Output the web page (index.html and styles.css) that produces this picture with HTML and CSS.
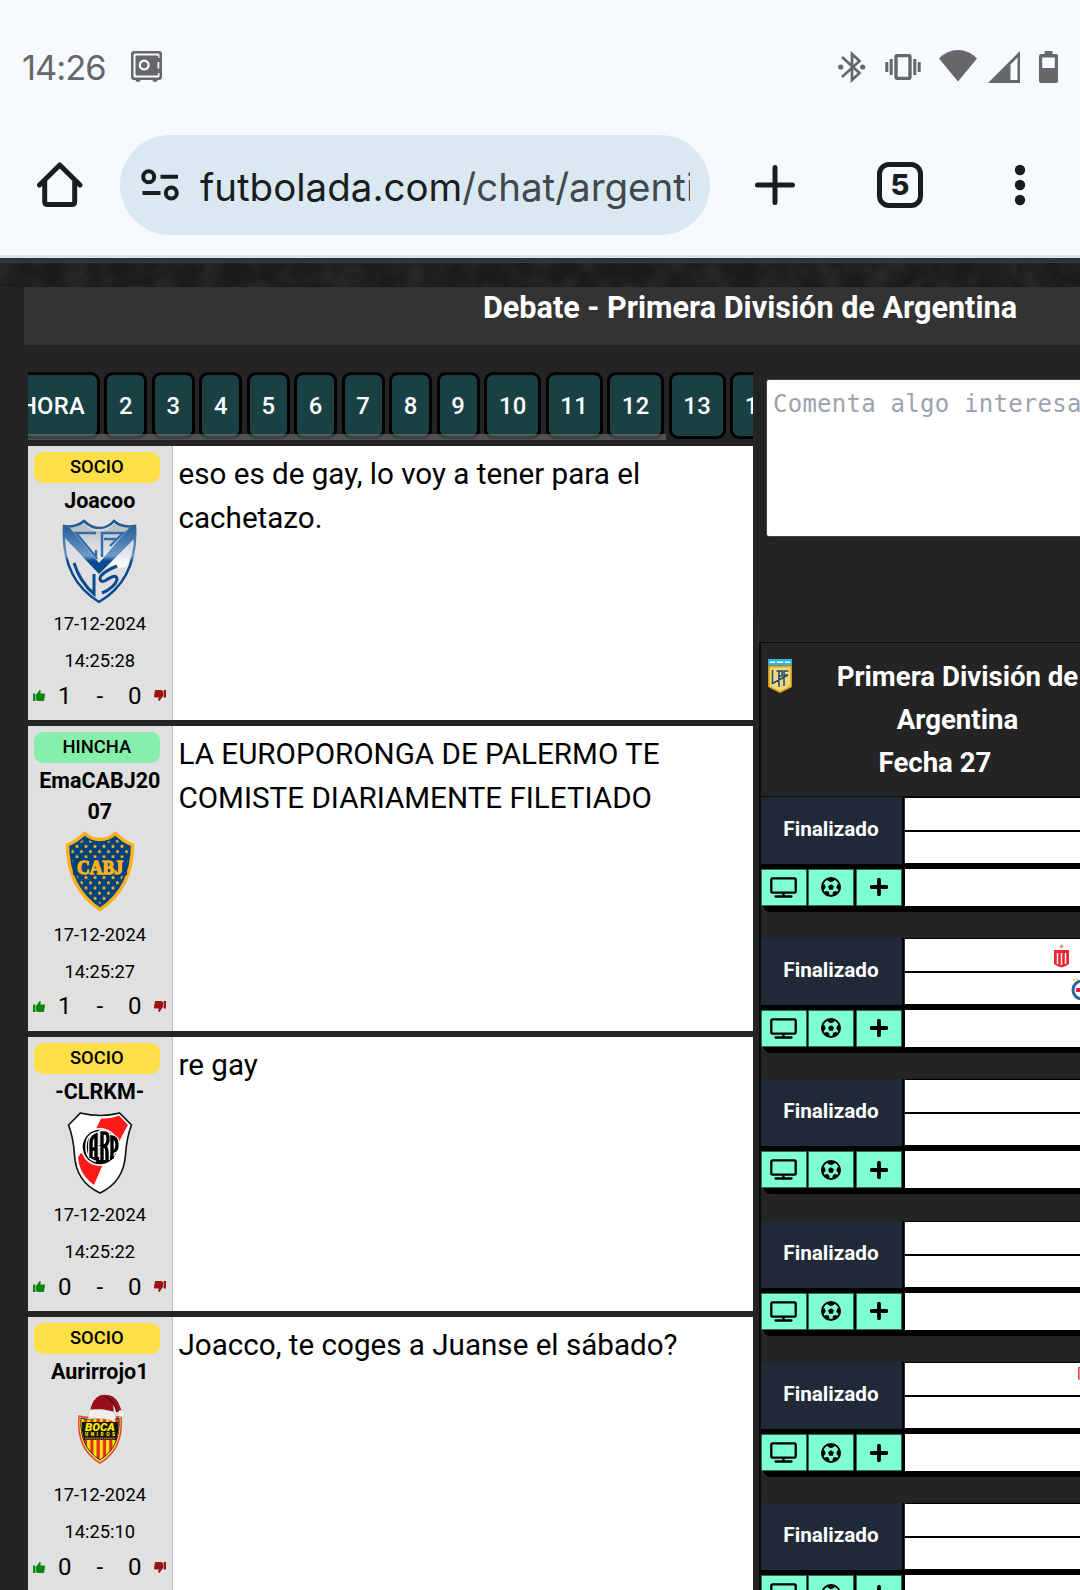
FILE: index.html
```html
<!DOCTYPE html>
<html lang="es">
<head>
<meta charset="utf-8">
<title>Debate - Primera División de Argentina</title>
<link rel="stylesheet" href="styles.css">
</head>
<body>
<svg class="defs" width="0" height="0">
  <defs>
    <symbol id="up" viewBox="0 0 12 11"><path d="M0 3.5h2.4V11H0zM3 5l3.6-5c1.2.1 1.3.9 1 2L7.2 3.6H11c.7 0 1 .5 1 1.1L11.2 10c-.1.6-.5 1-1.1 1H5L3 10z"/></symbol>
    <symbol id="tv" viewBox="0 0 27 21"><path d="M2.500 1.300h22q1.200 0 1.200 1.200v12q0 1.200-1.200 1.200h-22q-1.200 0-1.200-1.200v-12q0-1.200 1.200-1.200zM13.500 16v3.500M5.500 19.500h16" fill="none" stroke="#000" stroke-width="2.300" stroke-linecap="round"/></symbol>
    <symbol id="ball" viewBox="0 0 20 20"><circle cx="10" cy="10" r="9" fill="none" stroke="#000" stroke-width="1.900"/><path d="M10 7.200l2.900 2.100-1.100 3.400H8.200L7.100 9.300zM6 1.300h8L13.200 3.700 10 5.200 6.800 3.700zM.8 7l2.800.3L4.700 10.500 2.800 13 .8 13zM19.200 7l-2.800.3L15.300 10.500l1.900 2.500 2 0zM3.500 15.800l1.300-1.800 2.800.5 1 2.500-1 2zM16.500 15.800l-1.300-1.800-2.800.5-1 2.500 1 2z"/></symbol>
    <symbol id="plus" viewBox="0 0 18 18"><path d="M9 1.700v14.600M1.700 9h14.600" stroke="#000" stroke-width="3.800" stroke-linecap="round"/></symbol>
  </defs>
</svg>

<header class="browser">
  <div class="status">
    <span class="clock">14:26</span>
    <svg class="vault" width="31" height="31" viewBox="0 0 31 31"><path fill="#666769" fill-rule="evenodd" d="M3 0h25q3 0 3 3v23q0 3-3 3h-1.500q0 2-2.500 2t-2.500-2h-12q0 2-2.500 2t-2.500-2H3q-3 0-3-3V3q0-3 3-3zm1 2.500q-1.500 0-1.500 1.500v21q0 1.500 1.500 1.500h23q1.500 0 1.500-1.500v-3h-1.500v1q0 1.500-1.500 1.500H6q-1.500 0-1.500-1.500V6q0-1.500 1.500-1.500h20q1.500 0 1.500 1.500v1h1V4q0-1.500-1.500-1.500zM26.500 11v6.500h1.800V11zM13.200 8.500a5.500 5.500 0 1 0 .01 0zM13.200 10.700a3.300 3.300 0 1 1-.01 0z"/></svg>
    <svg class="bt" width="28" height="32" viewBox="0 0 28 32"><g fill="none" stroke="#666769" stroke-width="2.700"><path d="M4 6l17.500 16-7.500 7V3l7.500 7L4 26"/></g><circle cx="2.700" cy="16" r="2.600" fill="#666769"/><circle cx="24.700" cy="16" r="2.600" fill="#666769"/></svg>
    <svg class="vib" width="36" height="26" viewBox="0 0 36 26"><path d="M1.800 8v10M6.200 5v16M29.800 5v16M34.200 8v10" stroke="#666769" stroke-width="3"/><rect x="11" y="1.500" width="14" height="23" rx="1.500" fill="none" stroke="#666769" stroke-width="3.400"/></svg>
    <svg class="wifi" width="38" height="32" viewBox="0 0 38 32"><path fill="#666769" d="M0 8.500Q8 0 19 0t19 8.500L19 31.500z"/></svg>
    <svg class="sig" width="32" height="32" viewBox="0 0 32 32"><path fill="#666769" fill-rule="evenodd" d="M32 0v32H0zM29.500 6.500L22.500 13.500v15.500h7z"/></svg>
    <svg class="bat" width="19" height="32" viewBox="0 0 19 32"><path fill="#666769" fill-rule="evenodd" d="M5.500 0h8v3H17q2 0 2 2v25q0 2-2 2H2q-2 0-2-2V5q0-2 2-2h3.500zM3.200 6.500v10.500h12.600V6.500z"/></svg>
  </div>
  <div class="toolbar">
    <svg class="home" width="46" height="46" viewBox="0 0 46 46"><path d="M2.500 23L22.700 3 43 23M7.700 19.500v20q0 3 3 3h24q3 0 3-3v-20" fill="none" stroke="#191d20" stroke-width="5" stroke-linecap="round" stroke-linejoin="round"/></svg>
    <div class="omnibox">
      <svg width="38" height="32" viewBox="0 0 38 32"><g fill="none" stroke="#191d20" stroke-width="4"><circle cx="7.700" cy="7.700" r="5.500"/><circle cx="30.300" cy="24" r="5.500"/><path d="M19.500 7.700H37M1.500 24H19.500"/></g></svg>
      <div class="url"><span class="host">futbolada.com</span><span class="path">/chat/argenti</span></div>
    </div>
    <svg class="newtab" width="40" height="40" viewBox="0 0 40 40"><path d="M20 2.500v35M2.500 20h35" stroke="#191d20" stroke-width="5" stroke-linecap="round"/></svg>
    <div class="tabs">5</div>
    <svg class="more" width="12" height="42" viewBox="0 0 12 42"><g fill="#191d20"><circle cx="6" cy="6" r="5.200"/><circle cx="6" cy="21" r="5.200"/><circle cx="6" cy="36" r="5.200"/></g></svg>
  </div>
</header>

<div class="strip">
  <svg width="1080" height="24"><filter id="n" x="0" y="0" width="100%" height="100%"><feTurbulence type="fractalNoise" baseFrequency="0.045" numOctaves="3" seed="4"/><feColorMatrix values="0 0 0 0 .16  0 0 0 0 .16  0 0 0 0 .16  .9 0 0 0 -.3"/></filter><rect width="1080" height="24" filter="url(#n)" opacity=".35"/></svg>
</div>

<main class="page">
  <h1 class="title">Debate - Primera División de Argentina</h1>
  <div class="columns">
    <section class="chat">
      <nav class="pager">
        <a class="now">AHORA</a><a>2</a><a>3</a><a>4</a><a>5</a><a>6</a><a>7</a><a>8</a><a>9</a><a class="w">10</a><a class="w">11</a><a class="w">12</a><a class="w">13</a><a class="w">14</a>
        <i class="thumb"></i>
      </nav>

      <article class="msg">
        <aside>
          <span class="badge">SOCIO</span>
          <b class="name">Joacoo</b>
          <svg class="crest" width="78" height="86" viewBox="0 0 78 86">
            <defs><linearGradient id="vg" gradientUnits="userSpaceOnUse" x1="0" y1="0" x2="0" y2="84"><stop offset="0" stop-color="#174f8a"/><stop offset=".44" stop-color="#6b9bc9"/><stop offset=".5" stop-color="#0a4b8e"/><stop offset="1" stop-color="#0a4b8e"/></linearGradient><linearGradient id="vs" x2="0" y2="1"><stop offset="0" stop-color="#b4b9c0"/><stop offset="1" stop-color="#fff"/></linearGradient></defs>
            <path d="M3 7q12 2 20-5 7 7 15.500 7T53 2q7 7 21 5 3 53-36 76Q0 60 3 7z" fill="#e0e0e2" stroke="url(#vg)" stroke-width="2.500"/>
            <path d="M5 9q10 1 18-4 7 7 15.500 7T53 5q8 5 18 4 1 22-5 38Q54 53 39 39 24 26 6 32z" fill="url(#vs)"/>
            <path d="M3 7l6 2 29 35L68 9l6-2v12L38 55 4 19z" fill="url(#vg)"/>
            <path d="M35 14H15l20 24v-7M41 38V14h21L49 27M43 20h12" fill="none" stroke="#336ca8" stroke-width="2.400"/>
            <path d="M13 44q6 19 20 31V55M56 47q-17 7-17 13 1 5 8 0 9-6 9 1-3 8-15 13" fill="none" stroke="#0a4b8e" stroke-width="3"/>
          </svg>
          <time>17-12-2024</time><time>14:25:28</time>
          <div class="votes"><svg class="up"><use href="#up"/></svg><span>1</span><span>-</span><span>0</span><svg class="down"><use href="#up"/></svg></div>
        </aside>
        <p>eso es de gay, lo voy a tener para el cachetazo.</p>
      </article>

      <article class="msg two">
        <aside>
          <span class="badge fan">HINCHA</span>
          <b class="name">EmaCABJ2007</b>
          <svg class="crest" width="78" height="86" viewBox="0 0 78 86">
            <defs><pattern id="st" width="9" height="10.400" patternUnits="userSpaceOnUse"><path fill="#fbb516" d="M2.500.500l.7 1.400 1.500.2-1.100 1 .3 1.500-1.400-.7-1.400.7.3-1.500-1.100-1 1.500-.2z"/><path transform="translate(4.500 5.200)" fill="#fbb516" d="M2.500.500l.7 1.400 1.500.2-1.100 1 .3 1.500-1.400-.7-1.400.7.3-1.500-1.100-1 1.500-.2z"/></pattern></defs>
            <path d="M6.500 17Q16 13 23.500 5.500q7 6 15.500 6t15.500-6Q62 13 71.500 17q0 43-32.500 64.500Q6.500 60 6.500 17z" fill="#00427f" stroke="#fcb11a" stroke-width="3.400"/>
            <path d="M10 19Q19 15 24 10q7 5 15 5t15-5q5 5 14 9-1 38-29 57Q11 57 10 19z" fill="url(#st)"/>
            <rect x="12" y="30" width="54" height="17" fill="#00427f"/>
            <text x="39" y="45.500" textLength="46" lengthAdjust="spacingAndGlyphs" text-anchor="middle" font-family="Liberation Serif, serif" font-weight="700" font-size="19" fill="#fcb11a" stroke="#fcb11a" stroke-width="1.300">CABJ</text>
          </svg>
          <time>17-12-2024</time><time>14:25:27</time>
          <div class="votes"><svg class="up"><use href="#up"/></svg><span>1</span><span>-</span><span>0</span><svg class="down"><use href="#up"/></svg></div>
        </aside>
        <p>LA EUROPORONGA DE PALERMO TE COMISTE DIARIAMENTE FILETIADO</p>
      </article>

      <article class="msg">
        <aside>
          <span class="badge">SOCIO</span>
          <b class="name">-CLRKM-</b>
          <svg class="crest" width="78" height="86" viewBox="0 0 78 86">
            <path d="M7.500 15L19.500 3q20 5 39 0l12 12q-5 13-6 30-2 27-25.500 38Q15 72 13.500 45 12.500 28 7.500 15z" fill="#fff" stroke="#111" stroke-width="1.600"/>
            <path d="M40 8.500q10 .5 18-3l9 9.500q-3 5-9 17L35 19zM20 43l22 11-9 21Q18 64 17 47z" fill="#fd1a18"/>
            <circle cx="39" cy="37" r="19" fill="#fff"/><circle cx="39" cy="37" r="17.300" fill="#000"/>
            <path d="M35 22.500q-10 2-10 14.500t10 14.500" fill="none" stroke="#fff" stroke-width="1.500"/>
            <g fill="none" stroke="#fff" stroke-width="5.800"><path d="M30 47V33q0-6 5-8v22M30 39h5M41 50V23h3q3 0 3 6t-4 7q3 1 3 7v7M51 46V27q5 1 5 8t-5 6"/></g>
            <g fill="none" stroke="#000" stroke-width="3.400"><path d="M30 48V33q0-6 5-8v24M30 39h5M41 52V23h3q3 0 3 6t-4 7q3 1 3 7v9M51 49V27q5 1 5 8t-5 6"/></g>
          </svg>
          <time>17-12-2024</time><time>14:25:22</time>
          <div class="votes"><svg class="up"><use href="#up"/></svg><span>0</span><span>-</span><span>0</span><svg class="down"><use href="#up"/></svg></div>
        </aside>
        <p>re gay</p>
      </article>

      <article class="msg">
        <aside>
          <span class="badge">SOCIO</span>
          <b class="name">Aurirrojo1</b>
          <svg class="crest" width="78" height="86" viewBox="0 0 78 86">
            <defs><pattern id="bs" width="6.300" height="10" patternUnits="userSpaceOnUse"><rect width="6.300" height="10" fill="#e52a2b"/><rect x="1" width="3" height="10" fill="#fff000"/></pattern></defs>
            <path d="M18 26q10 3 21-1 11 4 21 1 3 33-21 47Q15 59 18 26z" fill="#fff04a" stroke="#e8422c" stroke-width="1.500"/>
            <path d="M20 28q10 3 19-1 9 4 19 1 2 29-19 42Q18 57 20 28z" fill="url(#bs)" stroke="#222" stroke-width="1"/>
            <path d="M21 32h36v9l-2 9H23l-2-9z" fill="#16150f"/>
            <text x="39" y="40.500" textLength="30" lengthAdjust="spacingAndGlyphs" text-anchor="middle" font-family="Roboto, sans-serif" font-weight="900" font-style="italic" font-size="10" fill="#fff000">BOCA</text>
            <text x="39" y="46" textLength="30" text-anchor="middle" font-family="Roboto, sans-serif" font-weight="900" font-size="4.800" fill="#fff000">UNIDOS</text>
            <path d="M24 48.500h30" stroke="#b46a30" stroke-width="2" stroke-dasharray="1.500 .6"/>
            <path d="M29 22Q31 8 40 5q12-2 17 7 3 6 4 11l-5-1-4-8 1 10z" fill="#98101a"/>
            <path d="M44 7q9 2 12 15" stroke="#5d0811" stroke-width="1.500" fill="none"/>
            <path d="M29 20q12-2 24 2 3 6 0 9-12-4-25-2-2-6 1-9z" fill="#f4efed" stroke="#cfc5c1" stroke-width=".8"/><circle cx="60.500" cy="23.500" r="3.300" fill="#f6f0ee" stroke="#d2c8c4" stroke-width=".7"/>
          </svg>
          <time>17-12-2024</time><time>14:25:10</time>
          <div class="votes"><svg class="up"><use href="#up"/></svg><span>0</span><span>-</span><span>0</span><svg class="down"><use href="#up"/></svg></div>
        </aside>
        <p>Joacco, te coges a Juanse el sábado?</p>
      </article>
    </section>

    <section class="side">
      <div class="composer"><div class="area">Comenta algo interesa</div></div>
      <div class="fixture">
        <header>
          <svg width="24" height="34" viewBox="0 0 24 34"><path fill="#2eb6dc" d="M0 0h24v6.500H0z"/><path d="M2 3.300h5M17 3.300h5M9 3.300h6" stroke="#fff" stroke-width="1.500"/><path d="M1 7.500h22v20L12 33 1 27.500z" fill="#f6d67c" stroke="#e0a91b" stroke-width="1.800"/><path d="M4.500 11v13.500L20 16M8.500 12h5.500v5h-4M11 12v16M16 27V12h4.500M16 16h4" fill="none" stroke="#124e74" stroke-width="1.500"/></svg>
          <h2>Primera División de<br>Argentina</h2>
          <h3>Fecha 27</h3>
        </header>
        <div class="match"><div class="state">Finalizado</div><div class="teams"><div></div><div></div></div><div class="acts"><span><svg width="27" height="21"><use href="#tv"/></svg></span><span><svg width="20" height="20"><use href="#ball"/></svg></span><span><svg width="18" height="18"><use href="#plus"/></svg></span></div><div class="info"></div></div>
        <div class="match"><div class="state">Finalizado</div><div class="teams"><div class="t1"><svg width="15" height="24" viewBox="0 0 15 24"><path d="M7.500 0l.7 1.500 1.500.2-1.200 1 .3 1.500-1.300-.8-1.300.8.300-1.500-1.200-1 1.500-.2z" fill="#ab9560"/><path d="M0 6h15v14q-3 2-7.500 3.500Q3 22 0 20z" fill="#eb2630"/><path d="M3.500 9v11M7.500 9v12M11.500 9v11" stroke="#fff" stroke-width="1.400"/></svg></div><div class="t2"><svg width="22" height="22" viewBox="0 0 22 22"><circle cx="11" cy="12" r="9" fill="#fff" stroke="#27659f" stroke-width="3"/><path d="M5 10h12v4H5z" fill="#e12333"/><path d="M2 2h2M5 1h2" stroke="#e7c24e" stroke-width="1.500"/></svg></div></div><div class="acts"><span><svg width="27" height="21"><use href="#tv"/></svg></span><span><svg width="20" height="20"><use href="#ball"/></svg></span><span><svg width="18" height="18"><use href="#plus"/></svg></span></div><div class="info"></div></div>
        <div class="match"><div class="state">Finalizado</div><div class="teams"><div></div><div></div></div><div class="acts"><span><svg width="27" height="21"><use href="#tv"/></svg></span><span><svg width="20" height="20"><use href="#ball"/></svg></span><span><svg width="18" height="18"><use href="#plus"/></svg></span></div><div class="info"></div></div>
        <div class="match"><div class="state">Finalizado</div><div class="teams"><div></div><div></div></div><div class="acts"><span><svg width="27" height="21"><use href="#tv"/></svg></span><span><svg width="20" height="20"><use href="#ball"/></svg></span><span><svg width="18" height="18"><use href="#plus"/></svg></span></div><div class="info"></div></div>
        <div class="match"><div class="state">Finalizado</div><div class="teams"><div class="t3"><svg width="16" height="15" viewBox="0 0 16 15"><path d="M.5.500h15V12L8 14.500.5 12z" fill="#f08a92" stroke="#d8444f"/></svg></div><div></div></div><div class="acts"><span><svg width="27" height="21"><use href="#tv"/></svg></span><span><svg width="20" height="20"><use href="#ball"/></svg></span><span><svg width="18" height="18"><use href="#plus"/></svg></span></div><div class="info"></div></div>
        <div class="match"><div class="state">Finalizado</div><div class="teams"><div></div><div></div></div><div class="acts"><span><svg width="27" height="21"><use href="#tv"/></svg></span><span><svg width="20" height="20"><use href="#ball"/></svg></span><span><svg width="18" height="18"><use href="#plus"/></svg></span></div><div class="info"></div></div>
      </div>
    </section>
  </div>
</main>
</body>
</html>
```
FILE: styles.css
```css
* { box-sizing: border-box; }
html { overflow: hidden; }
body { margin: 0; width: 1080px; height: 1590px; overflow: hidden; background: #242424; font-family: Roboto, sans-serif; color: #000; }
svg { display: block; flex: none; }
.defs { position: absolute; }

.browser { height: 258px; background: #f6faff; border-bottom: 3px solid #dae4eb; }
.status { height: 135px; padding: 50px 0 0 22px; display: flex; align-items: flex-start; color: #666769; }
.clock { width: 109px; font: 400 34.500px/36px Inter, sans-serif; letter-spacing: -1px; }
.vault { margin-top: 1px; }
.bt { margin: 1px 0 0 676px; }
.vib { margin: 4px 0 0 19px; }
.wifi { margin-left: 18px; }
.sig { margin: 1px 0 0 11px; }
.bat { margin: 1px 0 0 19px; }
.toolbar { display: flex; align-items: center; height: 100px; padding-left: 37px; }
.omnibox { margin-left: 37px; width: 590px; height: 100px; border-radius: 50px; background: #dae8f1; padding-left: 21px; display: flex; align-items: center; }
.url { margin: 3px 0 0 21px; width: 490px; overflow: hidden; white-space: nowrap; font: 400 38.500px/60px Inter, sans-serif; color: #41484d; }
.host { color: #191d20; }
.newtab { margin-left: 45px; }
.tabs { margin-left: 82px; width: 46px; height: 46px; border: 5px solid #191d20; border-radius: 12px; text-align: center; font: 800 29px/35px Inter, sans-serif; color: #191d20; }
.more { margin-left: 91px; }

.strip { height: 28.500px; background: #1b1b1b; border-top: 4px solid #333; box-shadow: inset 0 1px #3d3d3d; overflow: hidden; }
.strip svg { margin-top: 1px; }

.page { width: 1452px; margin-left: 24px; }
.title { margin: 0; height: 58px; background: #333; color: #fff; text-align: center; font-weight: 700; font-size: 30.600px; line-height: 42px; }
.columns { display: flex; padding: 27px 0 0 4px; }
.chat { width: 725.400px; }
.pager { position: relative; display: flex; justify-content: flex-start; gap: 4.200px; height: 68px; margin-bottom: 6px; overflow: hidden; }
.pager a { flex: none; width: 43.300px; height: 67px; border: 3px solid #000; border-radius: 9px; background: #194144; color: #fff; font-weight: 500; font-size: 23.800px; line-height: 62px; letter-spacing: .3px; text-align: center; }
.pager .now { width: 106px; margin-left: -34px; padding-right: 5px; }
.pager .w { width: 57.300px; }
.thumb { position: absolute; left: 0; bottom: 0; width: 638px; height: 6px; background: rgba(128,128,128,.5); }

.msg { display: grid; grid-template-columns: 144.500px 1fr; height: 274.500px; margin-bottom: 6px; background: #fff; }
.msg.two { height: 304.700px; }
.msg aside { background: #e0e0e0; border-right: 1px solid #bbb; padding-top: 6px; text-align: center; }
.badge { display: block; margin: 0 12px 2px 6px; height: 31px; border-radius: 9px; background: #fddf47; font-weight: 500; font-size: 18.400px; line-height: 30px; }
.badge.fan { background: #86efac; }
.name { display: block; width: 126px; margin: 0 auto; font-weight: 700; font-size: 21.500px; line-height: 31px; word-break: break-all; }
.crest { margin: 3.300px auto 1px; }
.two .crest { margin: 1.300px auto 2.700px; }
.msg time { display: block; font-size: 18.350px; line-height: 36.700px; }
.msg p { margin: 0; padding: 6.200px 6px; font-size: 29.600px; line-height: 44px; }
.votes { display: flex; align-items: center; justify-content: center; margin-top: -1.500px; font-size: 24px; line-height: 36px; }
.two .votes { margin-top: -2px; }
.votes span { width: 35px; text-align: center; }
.votes svg { width: 12px; height: 11px; }
.up { fill: #0a850d; margin-right: 2px; }
.down { fill: #9c1111; transform: rotate(180deg); margin-left: 2px; }

.side { width: 722px; padding-left: 5.600px; }
.composer { height: 246px; padding: 7px 0 0 7px; box-shadow: 0 0 2px #181818; }
.area { height: 158px; border: 1px solid #444; border-radius: 3px; background: #fff; color: #9ca3af; padding: 9px 6px; font: 24px/30px "DejaVu Sans Mono", monospace; letter-spacing: .25px; white-space: nowrap; }
.fixture { margin-top: 24px; width: 700px; border: 0 solid #0c0c0c; border-width: 1px 0 0 2px; color: #fff; }
.fixture header { display: grid; grid-template: 82px 43px / 24px 1fr; height: 154px; padding: 16px 0 0 7px; align-items: start; align-content: start; justify-items: start; border-bottom: 1px solid #0c0c0c; }
.fixture h2 { margin: -4px 0 0 43px; width: 245px; text-align: center; white-space: nowrap; font-weight: 700; font-size: 27.600px; line-height: 43px; }
.fixture h3 { margin: 0; grid-column: 1 / 3; width: 334px; text-align: center; font-weight: 700; font-size: 27.600px; line-height: 43px; }
.match { display: grid; grid-template: 67px 5px 37px / 141px 1fr; column-gap: 2px; height: 109px; margin-bottom: 32.400px; background: #000; border-radius: 0 0 0 8px; box-shadow: 2px 6px 0 #000; }
.state { background: #202938; text-align: center; font-weight: 700; font-size: 20.700px; line-height: 65.600px; padding-right: 1px; }
.teams { display: grid; grid-template-rows: 32px 31px; gap: 2px; padding: 1px 0; background: #000; border-left: 1px solid #333; }
.teams div { background: #fff; overflow: hidden; }
.t1 { padding: 5px 0 0 149px; }
.t2 { padding: 5px 0 0 166px; }
.t3 { padding: 4px 0 0 173px; }
.acts { grid-row: 3; display: flex; gap: 1.500px; }
.acts span { width: 46px; height: 37px; background: #7fffd4; border: 1px solid #2f6a57; display: flex; align-items: center; justify-content: center; }
.info { grid-row: 3; grid-column: 2; background: #fff; margin-left: 1px; }
```
